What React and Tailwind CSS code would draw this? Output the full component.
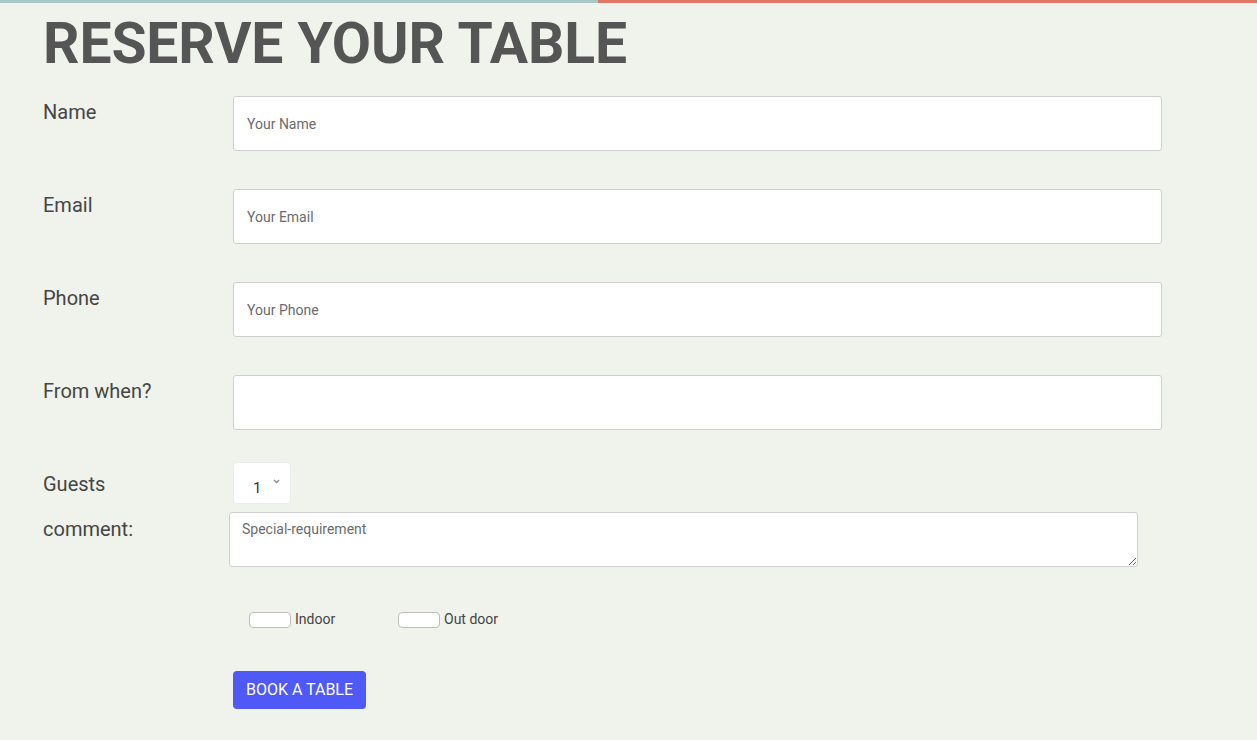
export default function App() {
  const font = { fontFamily: "Roboto, 'Liberation Sans', sans-serif" };
  const rows = [
    { label: "Name", ph: "Your Name" },
    { label: "Email", ph: "Your Email" },
    { label: "Phone", ph: "Your Phone" },
    { label: "From when?", ph: "" },
  ];

  return (
    <div className="min-h-[740px] w-[1257px] bg-[#f0f2ec]" style={font}>
      <div className="flex h-[3px]">
        <div className="w-[598px] bg-[#a7c8c7]" />
        <div className="flex-1 bg-[#e07766]" />
      </div>

      <div className="pl-[43px]">
        <h1 className="mt-[7px] text-[57px] font-bold leading-[68px] text-[#555555] tracking-[-0.1px]">
          RESERVE YOUR TABLE
        </h1>

        <form className="mt-[18px]">
          {rows.map((r) => (
            <div key={r.label} className="flex mb-[38px]">
              <label className="w-[190px] pt-[3px] text-[20px] leading-[26px] text-[#454545]">{r.label}</label>
              <input
                type="text"
                placeholder={r.ph}
                className="w-[929px] h-[55px] bg-white border border-[#cfcfcf] rounded-[3px] pl-[13px] text-[14px] text-[#333] placeholder:text-[#6b6b6b] outline-none"
              />
            </div>
          ))}

          <div className="flex -mt-[6px]">
            <label className="w-[190px] pt-[9px] text-[20px] leading-[26px] text-[#454545]">Guests</label>
            <div className="relative w-[58px] h-[42px] bg-white border border-[#ececec] rounded-[4px]">
              <span className="absolute left-[19px] top-[16px] text-[15px] leading-[18px] text-[#333]">1</span>
              <svg className="absolute left-[39px] top-[16px]" width="7" height="5" viewBox="0 0 7 5">
                <path d="M1 1l2.5 2.5L6 1" stroke="#888" strokeWidth="1.3" fill="none" />
              </svg>
            </div>
          </div>

          <div className="flex mt-[8px]">
            <label className="w-[186px] pt-[4px] text-[20px] leading-[26px] text-[#454545]">comment:</label>
            <textarea
              placeholder="Special-requirement"
              className="w-[909px] h-[55px] bg-white border border-[#cfcfcf] rounded-[3px] px-[12px] pt-[8px] text-[14px] leading-[17px] text-[#333] placeholder:text-[#6b6b6b] outline-none"
            />
          </div>

          <div className="flex items-center mt-[42px] ml-[206px] text-[14px] text-[#444]">
            <span className="w-[42px] h-[16px] bg-white border border-[#bdbdbd] rounded-[4px]" />
            <span className="ml-[4px] w-[103px]">Indoor</span>
            <span className="w-[42px] h-[16px] bg-white border border-[#bdbdbd] rounded-[4px]" />
            <span className="ml-[4px]">Out door</span>
          </div>

          <button
            type="button"
            className="mt-[41px] ml-[190px] w-[133px] h-[38px] bg-[#4f59f5] text-white text-[16px] rounded-[4px]"
          >
            BOOK A TABLE
          </button>
        </form>
      </div>
    </div>
  );
}
